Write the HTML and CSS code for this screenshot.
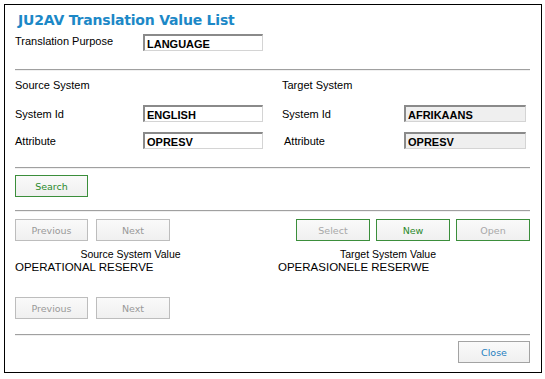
FILE: index.html
```html
<!DOCTYPE html>
<html lang="en">
<head>
    <meta charset="UTF-8">
    <title>JU2AV Translation Value List</title>
    <link rel="stylesheet" href="styles.css">
</head>
<body>

    <div class="dialog">
        <h1 class="title">JU2AV Translation Value List</h1>

        <div class="purpose-row">
            <label class="field-label">Translation Purpose</label>
            <input class="field" type="text" value="LANGUAGE" readonly>
        </div>

        <hr class="sep sep-first">

        <div class="systems">
            <div class="system">
                <div class="section-title">Source System</div>
                <div class="field-row row-id">
                    <label class="field-label">System Id</label>
                    <input class="field" type="text" value="ENGLISH" readonly>
                </div>
                <div class="field-row">
                    <label class="field-label">Attribute</label>
                    <input class="field" type="text" value="OPRESV" readonly>
                </div>
            </div>
            <div class="system system-target">
                <div class="section-title">Target System</div>
                <div class="field-row row-id">
                    <label class="field-label">System Id</label>
                    <input class="field field-locked" type="text" value="AFRIKAANS" readonly>
                </div>
                <div class="field-row">
                    <label class="field-label label-attr">Attribute</label>
                    <input class="field field-locked" type="text" value="OPRESV" readonly>
                </div>
            </div>
        </div>

        <hr class="sep">

        <div class="button-row">
            <button class="btn btn-green">Search</button>
        </div>

        <hr class="sep sep-mid">

        <div class="button-row nav-row">
            <div class="btn-group">
                <button class="btn btn-disabled">Previous</button>
                <button class="btn btn-disabled btn-next">Next</button>
            </div>
            <div class="btn-group group-right">
                <button class="btn btn-green btn-dim">Select</button>
                <button class="btn btn-green">New</button>
                <button class="btn btn-green btn-dim">Open</button>
            </div>
        </div>

        <div class="values">
            <div class="value-col">
                <div class="value-caption">Source System Value</div>
                <div class="value-text">OPERATIONAL RESERVE</div>
            </div>
            <div class="value-col">
                <div class="value-caption">Target System Value</div>
                <div class="value-text">OPERASIONELE RESERWE</div>
            </div>
        </div>

        <div class="button-row nav-row-bottom">
            <div class="btn-group">
                <button class="btn btn-disabled">Previous</button>
                <button class="btn btn-disabled btn-next">Next</button>
            </div>
        </div>

        <hr class="sep sep-last">

        <div class="button-row close-row">
            <button class="btn btn-close">Close</button>
        </div>
    </div>

</body>
</html>
```

FILE: styles.css
```css
body {
    margin: 0;
    padding: 4px;
    background-color: #fff;
    font-family: 'Liberation Sans', Arial, sans-serif;
    font-size: 11px;
    color: #000;
}

.dialog {
    width: 515px;
    height: 367px;
    padding: 0 11px 0 10px;
    border: 1px solid #000;
    box-sizing: content-box;
}

.title {
    margin: 4px 0 0 3px;
    height: 23px;
    font-family: 'DejaVu Sans', Verdana, sans-serif;
    font-size: 14px;
    font-weight: bold;
    letter-spacing: -0.2px;
    line-height: 23px;
    color: #1c88c7;
}

.field-label {
    display: inline-block;
    width: 128px;
}

.field {
    box-sizing: border-box;
    width: 120px;
    height: 17px;
    margin: 0;
    padding: 1px 2px 0;
    border: 1px solid #d4d4d4;
    border-top: 2px solid #8a8a8a;
    border-left: 2px solid #8a8a8a;
    background-color: #fff;
    font-family: 'Liberation Sans', Arial, sans-serif;
    font-size: 11px;
    font-weight: bold;
    color: #000;
    outline: none;
}

.field-locked {
    width: 122px;
    background-color: #efefef;
}

.purpose-row {
    display: flex;
    align-items: flex-start;
    height: 17px;
    margin-top: 2px;
}

.purpose-row .field-label {
    line-height: 14px;
}

.sep {
    margin: 0;
    height: 0;
    border: none;
    border-top: 1px solid #a0a0a0;
    border-bottom: 1px solid #f0f0f0;
}

.sep-first {
    margin-top: 18px;
}

.systems {
    display: grid;
    grid-template-columns: 263px 1fr;
    height: 96px;
}

.section-title {
    margin-top: 7px;
    height: 14px;
    line-height: 14px;
}

.system-target {
    padding-left: 4px;
}

.system-target .field-label {
    width: 122px;
}

.system-target .label-attr {
    padding-left: 2px;
    width: 120px;
}

.field-row {
    display: flex;
    align-items: center;
    height: 17px;
    margin-top: 10px;
}

.row-id {
    margin-top: 13px;
}

.button-row {
    display: flex;
    justify-content: space-between;
    padding: 6px 0 0;
    height: 22px;
}

.btn {
    box-sizing: border-box;
    width: 73px;
    height: 22px;
    margin: 0;
    padding: 0;
    background: linear-gradient(#fafafa, #f0f0f0);
    border: 1px solid #bdbdbd;
    font-family: 'DejaVu Sans', Tahoma, sans-serif;
    font-size: 9.5px;
    color: #999;
}

.btn-green {
    border-color: #3b8e3b;
    color: #2c8a2c;
}

.btn-dim {
    color: #a8a8a8;
    width: 74px;
}

.btn-group {
    display: flex;
    gap: 8px;
}

.btn-next {
    width: 74px;
}

.group-right {
    gap: 6px;
}

.group-right .btn-green {
    width: 74px;
}

.button-row + .sep-mid {
    margin-top: 13px;
}

.nav-row {
    padding-top: 7px;
}

.values {
    display: grid;
    grid-template-columns: 263px 1fr;
    margin-top: 6px;
    height: 50px;
    font-family: 'Liberation Sans', Arial, sans-serif;
}

.value-caption {
    padding: 1px 32px 0 0;
    height: 13px;
    font-size: 10.5px;
    text-align: center;
    line-height: 13px;
}

.value-text {
    font-size: 11.5px;
    line-height: 13px;
}

.nav-row-bottom {
    padding-top: 0;
}

.sep-last {
    margin-top: 15px;
}

.close-row {
    justify-content: flex-end;
    padding-top: 5px;
}

.btn-close {
    width: 72px;
    border-color: #a3a3a3;
    color: #1f7fc0;
}
```
